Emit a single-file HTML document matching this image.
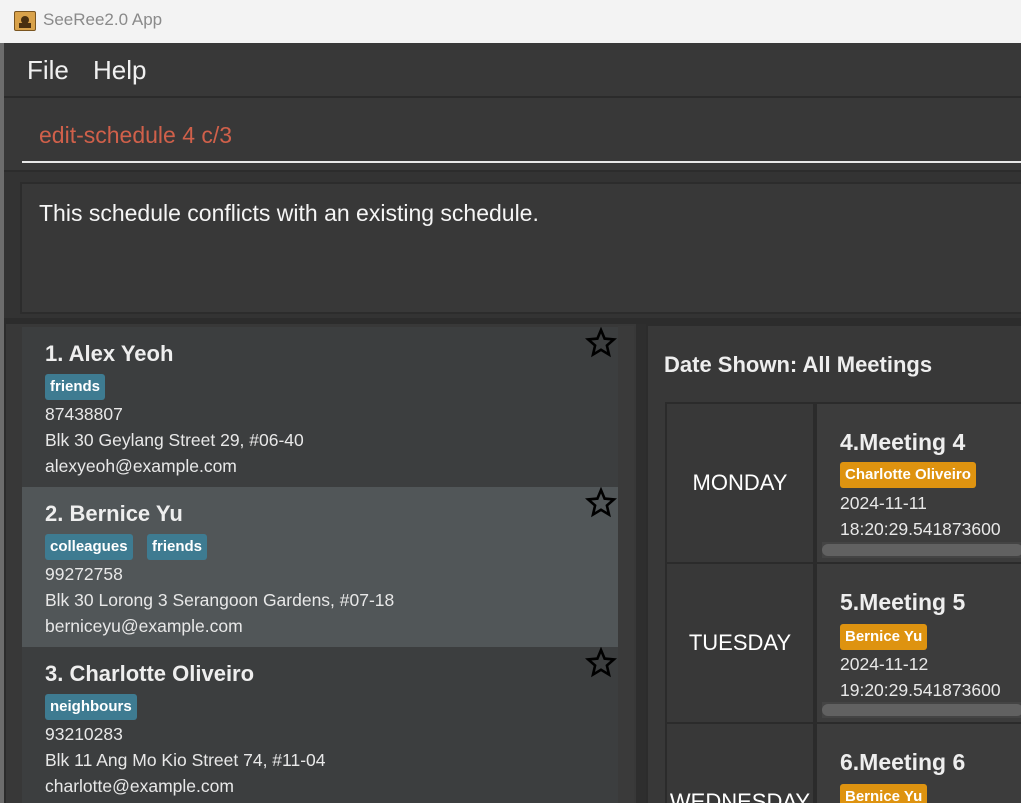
<!DOCTYPE html>
<html style="width:1021px;height:803px;overflow:hidden"><head><meta charset="utf-8"><style>
*{box-sizing:border-box;margin:0;padding:0}
body{width:1021px;height:803px;overflow:hidden;background:#2c2c2c;font-family:"Liberation Sans",sans-serif;position:relative;color:#fff}
.abs{position:absolute}
.tag{position:absolute;height:26px;line-height:26px;padding:0 5px;border-radius:3px;font-size:15px;font-weight:bold;color:#fff;background:#3e7b91}
.otag{background:#de9310}
.star{position:absolute;width:32px;height:32px}
.card{position:absolute;left:22px;width:596px;height:160px;background:#3c3e3f}
.card .nm{position:absolute;left:23px;top:14px;font-size:22px;font-weight:bold;color:#eee}
.card .ln{position:absolute;left:23px;font-size:17.5px;color:#e8e8e8}
.cell{position:absolute;border:2px solid #2b2b2b}
.day{left:665px;width:150px;background:#383838;font-size:22px;color:#fff;text-align:center}
.mt{left:815px;width:210px;background:#3c3c3c}
.mt .h{position:absolute;left:23px;top:25px;font-size:23px;font-weight:bold;color:#eee}
.mt .d{position:absolute;left:23px;font-size:17.5px;color:#e8e8e8}
.sb{position:absolute;left:5px;right:0;top:138px;height:16px;background:#444;}
.sb div{position:absolute;left:0;right:0;top:2px;height:12px;background:#616161;border-radius:6px}
</style></head><body>
<div class="abs" style="left:0;top:0;width:1021px;height:43px;background:#f3f3f3"></div>
<div class="abs" style="left:14px;top:11px;width:22px;height:20px;background:#d9a24a;border:1px solid #7a5520;border-radius:2px"><div class="abs" style="left:6px;top:4px;width:8px;height:8px;background:#4a3010;border-radius:50%"></div><div class="abs" style="left:4px;top:11px;width:12px;height:5px;background:#4a3010"></div></div>
<div class="abs" style="left:43px;top:10px;font-size:17px;color:#8a8a8a">SeeRee2.0 App</div>
<div class="abs" style="left:0;top:43px;width:4px;height:760px;background:#6d6d6d"></div>
<div class="abs" style="left:4px;top:43px;width:1017px;height:53px;background:#383838"></div>
<div class="abs" style="left:27px;top:55px;font-size:26px;color:#f0f0f0">File</div>
<div class="abs" style="left:93px;top:55px;font-size:26px;color:#f0f0f0">Help</div>
<div class="abs" style="left:4px;top:96px;width:1017px;height:2px;background:#2b2b2b"></div>
<div class="abs" style="left:4px;top:98px;width:1017px;height:72px;background:#383838"></div>
<div class="abs" style="left:39px;top:122px;font-size:23px;color:#d0604a">edit-schedule 4 c/3</div>
<div class="abs" style="left:22px;top:161px;width:999px;height:2px;background:#e8e8e8"></div>
<div class="abs" style="left:4px;top:172px;width:1017px;height:146px;background:#333"></div>
<div class="abs" style="left:20px;top:182px;width:1001px;height:132px;background:#383838;border:2px solid #2c2c2c;border-right:none"></div>
<div class="abs" style="left:39px;top:200px;font-size:23px;color:#f5f5f5">This schedule conflicts with an existing schedule.</div>
<div class="abs" style="left:4px;top:318px;width:1017px;height:6px;background:#2c2c2c"></div>
<div class="abs" style="left:6px;top:324px;width:630px;height:479px;background:#383838"></div>
<div class="abs" style="left:618px;top:326px;width:16px;height:477px;background:#3a3a3a"></div>
<div class="abs" style="left:636px;top:324px;width:10px;height:479px;background:#2e2e2e"></div>
<div class="abs" style="left:648px;top:326px;width:373px;height:477px;background:#383838"></div>

<div class="card" style="top:327px"><div class="nm">1. Alex Yeoh</div><div class="tag" style="left:23px;top:47px">friends</div><div class="ln" style="top:77px">87438807</div><div class="ln" style="top:103px">Blk 30 Geylang Street 29, #06-40</div><div class="ln" style="top:129px">alexyeoh@example.com</div></div>
<div class="card" style="top:487px;background:#515658"><div class="nm">2. Bernice Yu</div><div class="tag" style="left:23px;top:47px">colleagues</div><div class="tag" style="left:125px;top:47px">friends</div><div class="ln" style="top:77px">99272758</div><div class="ln" style="top:103px">Blk 30 Lorong 3 Serangoon Gardens, #07-18</div><div class="ln" style="top:129px">berniceyu@example.com</div></div>
<div class="card" style="top:647px;height:156px"><div class="nm">3. Charlotte Oliveiro</div><div class="tag" style="left:23px;top:47px">neighbours</div><div class="ln" style="top:77px">93210283</div><div class="ln" style="top:103px">Blk 11 Ang Mo Kio Street 74, #11-04</div><div class="ln" style="top:129px">charlotte@example.com</div></div>
<svg class="star" style="left:585px;top:327px" viewBox="0 0 32 32"><path d="M16 3l3.6 8.6 9.3.8-7 6.1 2.1 9.1L16 22.8l-8 4.8 2.1-9.1-7-6.1 9.3-.8z" fill="none" stroke="#000" stroke-width="2.6"/></svg>
<svg class="star" style="left:585px;top:487px" viewBox="0 0 32 32"><path d="M16 3l3.6 8.6 9.3.8-7 6.1 2.1 9.1L16 22.8l-8 4.8 2.1-9.1-7-6.1 9.3-.8z" fill="none" stroke="#000" stroke-width="2.6"/></svg>
<svg class="star" style="left:585px;top:647px" viewBox="0 0 32 32"><path d="M16 3l3.6 8.6 9.3.8-7 6.1 2.1 9.1L16 22.8l-8 4.8 2.1-9.1-7-6.1 9.3-.8z" fill="none" stroke="#000" stroke-width="2.6"/></svg>

<div class="abs" style="left:664px;top:352px;font-size:22px;font-weight:bold;color:#eee">Date Shown: All Meetings</div>
<div class="cell day" style="top:402px;height:162px;line-height:158px">MONDAY</div>
<div class="cell mt" style="top:402px;height:162px"><div class="h">4.Meeting 4</div><div class="tag otag" style="left:23px;top:58px">Charlotte Oliveiro</div><div class="d" style="top:89px">2024-11-11</div><div class="d" style="top:115px">18:20:29.541873600</div><div class="sb"><div></div></div></div>
<div class="cell day" style="top:562px;height:162px;line-height:158px">TUESDAY</div>
<div class="cell mt" style="top:562px;height:162px"><div class="h">5.Meeting 5</div><div class="tag otag" style="left:23px;top:60px">Bernice Yu</div><div class="d" style="top:90px">2024-11-12</div><div class="d" style="top:116px">19:20:29.541873600</div><div class="sb"><div></div></div></div>
<div class="cell day" style="top:722px;height:81px;border-bottom:none;overflow:hidden"><div style="position:absolute;left:0;right:0;top:63px;line-height:30px">WEDNESDAY</div></div>
<div class="cell mt" style="top:722px;height:81px;border-bottom:none;overflow:hidden"><div class="h">6.Meeting 6</div><div class="tag otag" style="left:23px;top:60px">Bernice Yu</div></div>
</body></html>
